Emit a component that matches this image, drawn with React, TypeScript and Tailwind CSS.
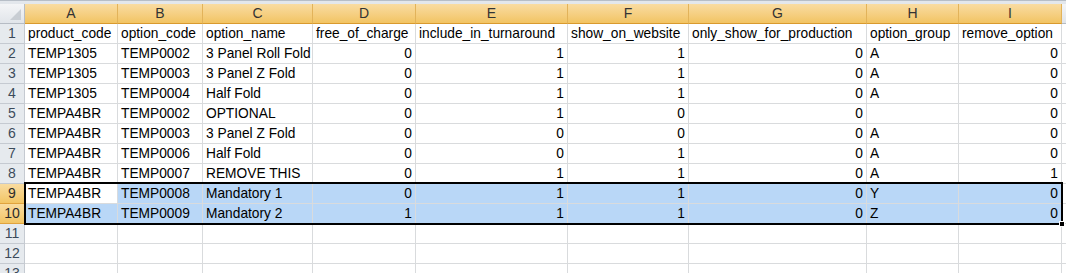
import React from "react";

const colWidths = [
  "w-[93px]",
  "w-[85px]",
  "w-[110px]",
  "w-[103px]",
  "w-[152px]",
  "w-[121px]",
  "w-[178px]",
  "w-[92px]",
  "w-[103px]",
];

const letters = ["A", "B", "C", "D", "E", "F", "G", "H", "I"];

// true => numeric column (right aligned) for data rows
const numeric = [false, false, false, true, true, true, true, false, true];

const header = [
  "product_code",
  "option_code",
  "option_name",
  "free_of_charge",
  "include_in_turnaround",
  "show_on_website",
  "only_show_for_production",
  "option_group",
  "remove_option",
];

const data: string[][] = [
  ["TEMP1305", "TEMP0002", "3 Panel Roll Fold", "0", "1", "1", "0", "A", "0"],
  ["TEMP1305", "TEMP0003", "3 Panel Z Fold", "0", "1", "1", "0", "A", "0"],
  ["TEMP1305", "TEMP0004", "Half Fold", "0", "1", "1", "0", "A", "0"],
  ["TEMPA4BR", "TEMP0002", "OPTIONAL", "0", "1", "0", "0", "", "0"],
  ["TEMPA4BR", "TEMP0003", "3 Panel Z Fold", "0", "0", "0", "0", "A", "0"],
  ["TEMPA4BR", "TEMP0006", "Half Fold", "0", "0", "1", "0", "A", "0"],
  ["TEMPA4BR", "TEMP0007", "REMOVE THIS", "0", "1", "1", "0", "A", "1"],
  ["TEMPA4BR", "TEMP0008", "Mandatory 1", "0", "1", "1", "0", "Y", "0"],
  ["TEMPA4BR", "TEMP0009", "Mandatory 2", "1", "1", "1", "0", "Z", "0"],
];

const font = "font-['Liberation_Sans',Arial,sans-serif]";

function RowHeader({ n, selected }: { n: number; selected: boolean }) {
  return (
    <div
      className={
        selected
          ? "w-[25px] h-[20px] shrink-0 flex items-center justify-center border-r border-b border-[#e0a33d] bg-gradient-to-b from-[#f9dca0] to-[#f2c563] text-[#2b2b2b] text-[14px]"
          : "w-[25px] h-[20px] shrink-0 flex items-center justify-center border-r border-b border-[#c5cad1] bg-[#e6eaee] text-[#3c4a5a] text-[14px]"
      }
    >
      {n}
    </div>
  );
}

function Row({ n, cells }: { n: number; cells: string[] }) {
  const sel = n === 9 || n === 10;
  return (
    <div className="flex">
      <RowHeader n={n} selected={sel} />
      {colWidths.map((w, i) => {
        const active = n === 9 && i === 0;
        const blue = sel && !active;
        const right = n > 1 && numeric[i];
        return (
          <div
            key={i}
            className={`${w} h-[20px] shrink-0 border-r border-b border-[#d9dbdd] px-[3px] leading-[19px] whitespace-nowrap overflow-hidden ${
              right ? "text-right" : "text-left"
            } ${blue ? "bg-[#b9d7f7]" : "bg-white"}`}
          >
            {cells[i] ?? ""}
          </div>
        );
      })}
      <div className="flex-1 h-[20px] border-b border-[#d9dbdd] bg-white" />
    </div>
  );
}

export default function App() {
  return (
    <div
      className={`relative w-[1066px] h-[273px] overflow-hidden bg-white text-black text-[13.75px] ${font}`}
    >
      {/* top strip */}
      <div className="h-[4px] bg-[#e3e7ec] border-t border-[#b7bec7]" />

      {/* column headers */}
      <div className="flex">
        <div className="relative w-[25px] h-[20px] shrink-0 border-r border-b border-[#b6bcc4] bg-gradient-to-b from-[#f4f5f7] to-[#e1e5ea]">
          <svg
            className="absolute right-[3px] bottom-[3px]"
            width="11"
            height="11"
            viewBox="0 0 11 11"
          >
            <polygon points="11,0 11,11 0,11" fill="#c8cdd3" />
          </svg>
        </div>
        {colWidths.map((w, i) => (
          <div
            key={i}
            className={`${w} h-[20px] shrink-0 flex items-center justify-center border-r border-b border-r-[#e2b35a] border-b-[#d99a2e] bg-gradient-to-b from-[#f9dca2] to-[#f2c462] text-[#333] text-[14px]`}
          >
            {letters[i]}
          </div>
        ))}
        <div className="flex-1 h-[20px] border-b border-[#b6bcc4] bg-gradient-to-b from-[#f4f5f7] to-[#e1e5ea]" />
      </div>

      <Row n={1} cells={header} />
      {data.map((r, i) => (
        <Row key={i} n={i + 2} cells={r} />
      ))}
      <Row n={11} cells={[]} />
      <Row n={12} cells={[]} />
      <Row n={13} cells={[]} />

      {/* selection border */}
      <div className="absolute left-[24px] top-[182px] w-[1039px] h-[43px] border-2 border-black pointer-events-none">
        <div className="absolute right-[-4px] bottom-[-4px] w-[6px] h-[6px] bg-black border border-white" />
      </div>
    </div>
  );
}
